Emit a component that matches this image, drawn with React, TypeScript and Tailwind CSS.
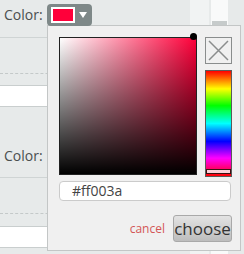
import React from "react";

function ColorField({ children }: { children?: React.ReactNode }) {
  return <>{children}</>;
}

export default function App() {
  const font = { fontFamily: '"Open Sans", "Noto Sans", sans-serif' };
  return (
    <div
      className="relative w-[244px] h-[254px] overflow-hidden bg-[#e7eaea] flex"
      style={font}
    >
      {/* background form */}
      <div className="w-[190px] flex flex-col shrink-0">
        <div className="h-[38px] border-b border-[#cfd4d4] flex items-start pt-[4px] pl-[4px]">
          <span className="w-[43px] text-[14px] leading-[21px] text-[#4a4f4f]">Color:</span>
          <button className="relative z-10 w-[45px] h-[22px] rounded-[4px] bg-[#7e8888] flex items-center pl-[4px]">
            <span className="w-[24px] h-[16px] border-[2px] border-white bg-[#ff003a]" />
            <svg width="8" height="6" viewBox="0 0 8 6" className="ml-[4px]">
              <path d="M0 0 L8 0 L4 6 Z" fill="#ffffff" />
            </svg>
          </button>
        </div>
        <div className="h-[36px] border-b border-dashed border-[#c4c9c9]" />
        <div className="mt-[11px] h-[22px] bg-white border-y border-[#c9cece]" />
        <div className="h-[71px] border-b border-[#cfd4d4] flex items-end pb-[11px] pl-[4px]">
          <span className="text-[14px] leading-[21px] text-[#4a4f4f]">Color:</span>
        </div>
        <div className="h-[36px] border-b border-dashed border-[#c4c9c9]" />
        <div className="mt-[12px] h-[22px] bg-white border-y border-[#c9cece]" />
      </div>
      <div className="w-[19px] bg-[#f1f3f3]" />
      <div className="w-[2px]" />
      <div className="w-[17px] bg-[#f9fafa] flex flex-col">
        <div className="mt-[21px] mx-[1px] h-[4px] bg-[#c6cbcb]" />
      </div>

      {/* popup */}
      <div className="absolute left-[47px] top-[25px] w-[194px] h-[226px] border border-[#c3c6c6] bg-[#f0f0f0] pl-[11px] pr-[8px] pt-[11px] flex flex-col">
        <div className="flex gap-[7px]">
          <div
            className="relative w-[138px] h-[138px] border border-[#222]"
            style={{
              background:
                "linear-gradient(to top, #000 0%, rgba(0,0,0,0) 100%), linear-gradient(to right, #fff 0%, #ff003a 100%)",
            }}
          >
            <div className="absolute right-[-1px] top-[-5px] w-[7px] h-[7px] rounded-full bg-black" />
          </div>
          <div className="flex flex-col w-[27px] ml-[1px]">
            <div className="w-[27px] h-[27px] border border-[#8a8d8d]">
              <svg width="25" height="25" viewBox="0 0 25 25">
                <path d="M3 3 L22 22 M22 3 L3 22" stroke="#8a8d8d" strokeWidth="1.5" fill="none" />
              </svg>
            </div>
            <div
              className="relative mt-[6px] w-[27px] h-[107px] border border-[#5a5a5a]"
              style={{
                background:
                  "linear-gradient(to bottom, #f00 0%, #ff0 17%, #0f0 33%, #0ff 50%, #00f 67%, #f0f 83%, #f00 100%)",
              }}
            >
              <div className="absolute left-0 right-0 top-[98px] h-[5px] border border-[#3a1010] bg-[#fbd0d8]" />
            </div>
          </div>
        </div>
        <div className="mt-[4px] w-[172px] h-[20px] rounded-[4px] border border-[#cbcbcb] bg-white flex items-center pl-[12px]">
          <span className="text-[14px] leading-none text-[#444]">#ff003a</span>
        </div>
        <div className="mt-[14px] flex justify-end items-center gap-[8px]">
          <span className="text-[12px] text-[#d35656]">cancel</span>
          <button
            className="w-[59px] h-[27px] rounded-[3px] border border-[#a9a9a9] text-[17px] leading-none text-[#333] flex items-center justify-center"
            style={{ background: "linear-gradient(to bottom, #e3e3e3, #bdbdbd)" }}
          >
            choose
          </button>
        </div>
      </div>
      <ColorField />
    </div>
  );
}
